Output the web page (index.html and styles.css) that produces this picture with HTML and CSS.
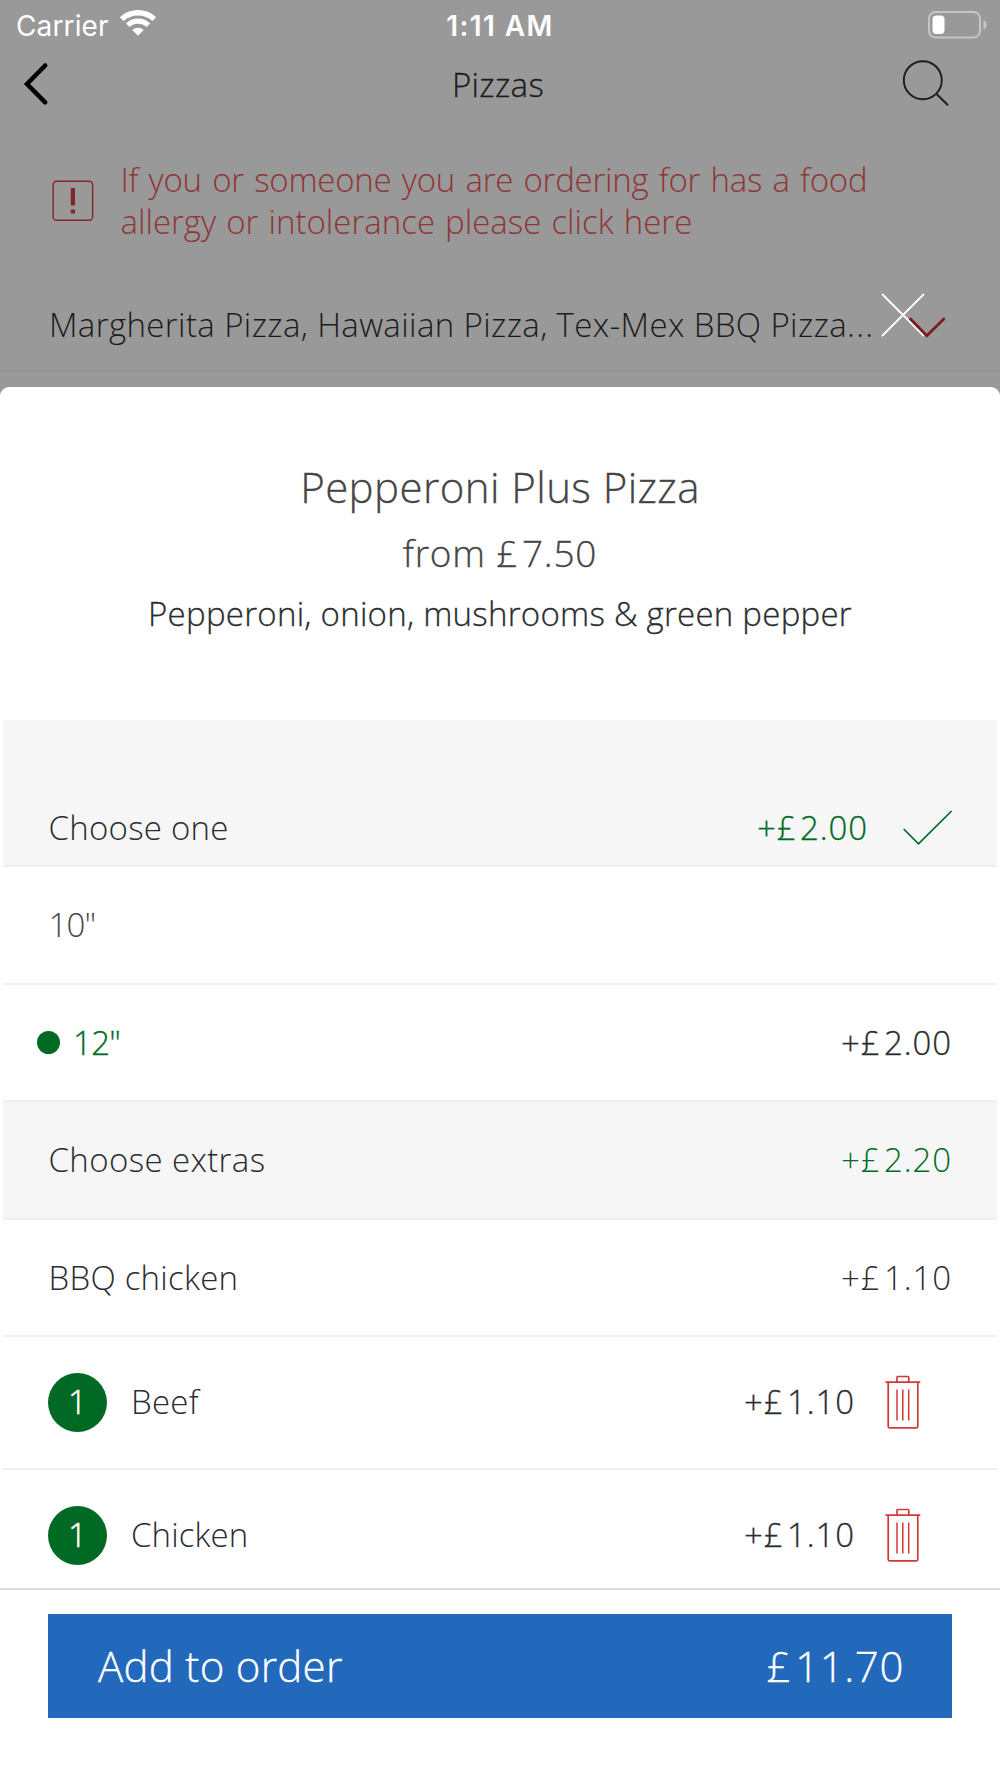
FILE: index.html
```
<!DOCTYPE html>
<html lang="en">
<head>
<meta charset="utf-8">
<title>Pepperoni Plus Pizza</title>
<link rel="stylesheet" href="styles.css">
</head>
<body>
<div class="screen">
  <header class="status">
    <div class="carrier">
      <span>Carrier</span>
      <svg width="38" height="28" viewBox="0 0 38 28" fill="#fff">
        <path d="M.8 8.200A26.500 26.500 0 0 1 37.200 8.200L33.400 12A21.500 21.500 0 0 0 4.600 12Z"/>
        <path d="M6.900 14.500A17.400 17.400 0 0 1 31.100 14.500L27.400 18.100A12.500 12.500 0 0 0 10.600 18.100Z"/>
        <path d="M13.300 20.900A8.400 8.400 0 0 1 24.700 20.900L19 26.800Z"/>
      </svg>
    </div>
    <span class="time">1:11 AM</span>
    <svg class="battery" width="60" height="30" viewBox="0 0 60 30">
      <rect x="2" y="2" width="51" height="25.500" rx="6.500" fill="none" stroke="#c6c6c6" stroke-width="2"/>
      <rect x="5.500" y="5.500" width="12" height="18.500" rx="4" fill="#fff"/>
      <path d="M56.500 10C60.600 11.800 60.600 18 56.500 19.800Z" fill="#c6c6c6"/>
    </svg>
  </header>

  <nav class="nav">
    <svg class="back" width="30" height="46" viewBox="0 0 30 46" fill="none" stroke="#000" stroke-width="4.500" stroke-linecap="round">
      <path d="M24.200 4.500L6 23L24.200 41.300"/>
    </svg>
    <span class="nav-title">Pizzas</span>
    <svg class="search" width="50" height="50" viewBox="0 0 50 50" fill="none" stroke="#1c1c1c" stroke-width="1.900">
      <circle cx="22.800" cy="22.200" r="19"/>
      <path d="M36.500 36L48 47.300"/>
    </svg>
  </nav>

  <div class="alert">
    <svg width="42" height="42" viewBox="0 0 42 42">
      <rect x="1.200" y="1.200" width="39.400" height="39" rx="3.500" fill="none" stroke="#822626" stroke-width="1.400"/>
      <path d="M18.800 8h4.200v17.600h-4.200zM18.800 29.500h4.200v4h-4.200z" fill="#822626"/>
    </svg>
    <p><span class="alert-a">If you or someone you are ordering for has a food</span><br><span class="alert-b">allergy or intolerance please click here</span></p>
  </div>

  <div class="category">
    <span>Margherita Pizza, Hawaiian Pizza, Tex-Mex BBQ Pizza<span class="dots">...</span></span>
    <svg class="close" width="44" height="44" viewBox="0 0 44 44" fill="none" stroke="#fff" stroke-width="1.800" stroke-linecap="round">
      <path d="M1.500 1.500L42.500 42.500M42.500 1.500L1.500 42.500"/>
    </svg>
    <svg class="chevron" width="38" height="22" viewBox="0 0 38 22" fill="none" stroke="#7c1d1b" stroke-width="2.800" stroke-linecap="round">
      <path d="M2.500 2L18.800 18.800L35.800 2"/>
    </svg>
  </div>

  <main class="sheet">
    <section class="intro">
      <h1>Pepperoni Plus Pizza</h1>
      <p class="from">from <span class="cur">£</span>7.50</p>
      <p class="desc">Pepperoni, onion, mushrooms &amp; green pepper</p>
    </section>

    <section class="list">
      <div class="row group first">
        <span class="label">Choose one</span>
        <span class="price green strong">+<span class="cur">£</span>2.00</span>
        <svg class="check" width="50" height="36" viewBox="0 0 50 36" fill="none" stroke="#006a24" stroke-width="1.700">
          <path d="M.7 19L15.500 33.800L48.600 1"/>
        </svg>
      </div>
      <div class="row">
        <span class="label size">10"</span>
      </div>
      <div class="row picked">
        <span class="dot"></span>
        <span class="label green strong">12"</span>
        <span class="price strong">+<span class="cur">£</span>2.00</span>
      </div>
      <div class="row group extras">
        <span class="label wide">Choose extras</span>
        <span class="price green">+<span class="cur">£</span>2.20</span>
      </div>
      <div class="row">
        <span class="label">BBQ chicken</span>
        <span class="price">+<span class="cur">£</span>1.10</span>
      </div>
      <div class="row item">
        <span class="count">1</span>
        <span class="label">Beef</span>
        <span class="price strong">+<span class="cur">£</span>1.10</span>
        <svg width="36" height="54" viewBox="0 0 36 54" fill="none" stroke="#d23a3a" stroke-width="1.700">
          <path d="M.5 7.200H35.300M12 7V2.500Q12 1.500 13 1.500H22.800Q23.800 1.500 23.800 2.500V7"/>
          <path d="M3.200 7.500V51.500Q3.200 52.800 4.500 52.800H31.500Q32.800 52.800 32.800 51.500V7.500"/>
          <path d="M12 14.500V45.500M17.800 14.500V45.500M23.700 14.500V45.500" stroke-width="1.500"/>
        </svg>
      </div>
      <div class="row item">
        <span class="count">1</span>
        <span class="label chicken">Chicken</span>
        <span class="price strong">+<span class="cur">£</span>1.10</span>
        <svg width="36" height="54" viewBox="0 0 36 54" fill="none" stroke="#d23a3a" stroke-width="1.700">
          <path d="M.5 7.200H35.300M12 7V2.500Q12 1.500 13 1.500H22.800Q23.800 1.500 23.800 2.500V7"/>
          <path d="M3.200 7.500V51.500Q3.200 52.800 4.500 52.800H31.500Q32.800 52.800 32.800 51.500V7.500"/>
          <path d="M12 14.500V45.500M17.800 14.500V45.500M23.700 14.500V45.500" stroke-width="1.500"/>
        </svg>
      </div>
    </section>

    <footer class="footer">
      <button class="add"><span>Add to order</span><span class="total"><span class="cur">£</span>11.70</span></button>
    </footer>
  </main>
</div>
</body>
</html>
```
FILE: styles.css
```
* { box-sizing: border-box; }
body { margin: 0; }
h1, p { margin: 0; font-weight: 300; }
svg { display: block; flex: none; }

.screen {
  width: 1000px;
  height: 1778px;
  display: flex;
  flex-direction: column;
  overflow: hidden;
  background: #999;
  color: #2a2d2f;
  font: 300 33px/42px "Open Sans", sans-serif;
  white-space: nowrap;
}

/* Status bar */
.status {
  height: 51px;
  flex: none;
  display: grid;
  grid-template-columns: 1fr auto 1fr;
  align-items: center;
  padding: 0 13px 0 16px;
  color: #fff;
  font: 400 28px/34px Inter, sans-serif;
}
.carrier { display: flex; align-items: center; gap: 10px; letter-spacing: .13px; }
.carrier svg { margin-top: -5px; }
.time { font-weight: 600; letter-spacing: 1.4px; margin-left: -3px; }
.battery { justify-self: end; margin-top: -2px; }

/* Navigation bar */
.nav {
  height: 64px;
  flex: none;
  display: grid;
  grid-template-columns: 1fr auto 1fr;
  align-items: center;
  padding: 2px 50px 0 21px;
  color: #1c1c1c;
}
.nav-title { padding-top: 2px; letter-spacing: .36px; margin-left: 25px; -webkit-text-stroke: .3px; }
.search { justify-self: end; margin-top: -2px; }

/* Allergy notice */
.alert {
  flex: none;
  display: flex;
  align-items: center;
  gap: 27px;
  padding: 44px 0 0 51.500px;
  color: #8e3636;
}
.alert-a { letter-spacing: -.24px; word-spacing: 2px; }
.alert-b { letter-spacing: 0; word-spacing: 1.500px; }

/* Collapsed category row */
.category {
  position: relative;
  flex: none;
  height: 94px;
  margin: 35px 0 14.500px;
  padding: 2px 54px 0 49px;
  display: flex;
  align-items: center;
  justify-content: space-between;
  border-bottom: 2px solid #929292;
  color: #1c1c1c;
  letter-spacing: .38px;
}
.dots { letter-spacing: 1.300px; }
.chevron { position: relative; margin-top: 6px; }
.close { position: absolute; left: 881px; top: 14.500px; }

/* Product sheet */
.sheet {
  flex: 1;
  min-height: 0;
  display: flex;
  flex-direction: column;
  background: #fff;
  border-radius: 9px 9px 0 0;
}
.intro { flex: none; padding: 67px 0 79.500px; text-align: center; }
h1 { font-size: 42px; line-height: 66px; letter-spacing: .42px; color: #454545; -webkit-text-stroke: .3px; }
.from { font-size: 37px; line-height: 66px; letter-spacing: .8px; color: #454545; -webkit-text-stroke: .3px; }
.desc { padding-top: 1px; line-height: 54px; letter-spacing: .26px; -webkit-text-stroke: .3px; }
.cur { letter-spacing: 4.500px; }

.list { flex: 1; min-height: 0; overflow: hidden; padding: 0 3px; }
.row {
  height: 117px;
  display: flex;
  align-items: center;
  padding: 0 45px 0 45.500px;
  border-bottom: 2px solid #efefef;
}
.row:nth-child(2) { height: 118px; }
.group { background: #f6f6f6; }
.group.extras { height: 118px; }
.group.first { height: 147px; padding: 71px 44px 0 45.500px; }
.label { letter-spacing: .25px; }
.label.wide { letter-spacing: .38px; }
.label.size { letter-spacing: -.8px; color: #454545; }
.price { margin-left: auto; letter-spacing: .9px; }
.strong { -webkit-text-stroke: .3px; }
.green { color: #006a24; }
.check { margin-left: 35px; }

.row.picked { padding: 0 45px 0 34px; }
.picked .label { margin-left: 13px; letter-spacing: -.7px; }
.dot { width: 23px; height: 23px; border-radius: 50%; background: #006a24; }

.row.item { height: 133px; padding: 0 76px 1px 45px; }
.item .label { margin-left: 24px; }
.item .chicken { letter-spacing: .1px; }
.item svg { margin-left: 30px; }
.count {
  width: 59px;
  height: 59px;
  border-radius: 50%;
  background: #006a24;
  color: #fff;
  text-align: center;
  line-height: 58px;
  -webkit-text-stroke: .5px;
}

/* Order bar */
.footer { flex: none; height: 190px; padding: 24px 48px 0; border-top: 2px solid #dcdcdc; background: #fff; }
.add {
  width: 100%;
  height: 104px;
  display: flex;
  align-items: center;
  justify-content: space-between;
  padding: 0 48px 1px 50px;
  border: 0;
  background: #2369bb;
  color: #fff;
  font: 300 42px/60px "Open Sans", sans-serif;
  letter-spacing: .29px;
  -webkit-text-stroke: .3px;
}
.total { letter-spacing: .6px; }
```
